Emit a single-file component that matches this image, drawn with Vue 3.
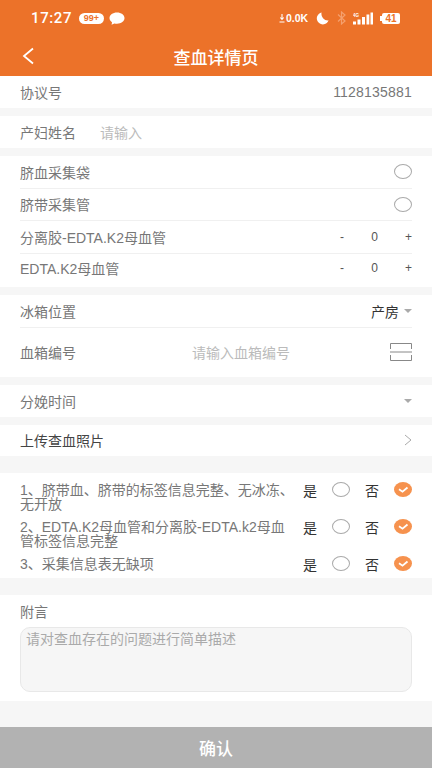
<script setup>
const checks = [
  { text: '1、脐带血、脐带的标签信息完整、无冰冻、无开放' },
  { text: '2、EDTA.K2母血管和分离胶-EDTA.k2母血管标签信息完整' },
  { text: '3、采集信息表无缺项' },
]
</script>

<template>
  <div class="page">
    <header class="header">
      <div class="status">
        <div class="status-left">
          <span class="time">17:27</span>
          <span class="pill">99+</span>
          <svg class="bubble" viewBox="0 0 16 13"><path d="M8 0.5c4.2 0 7.5 2.4 7.5 5.6S12.2 11.7 8 11.7c-.9 0-1.8-.1-2.6-.3L2.6 12.8l.4-2.6C1.300 9.200.5 7.800.5 6.100.5 2.900 3.800.5 8 .5z" fill="#fff"/></svg>
        </div>
        <div class="status-right">
          <span class="speed"><svg class="dl" viewBox="0 0 6 9"><path d="M3 0v5M1.300 3.500 3 5.500l1.700-2M.5 8h5" stroke="#fff" stroke-width="1.100" fill="none"/></svg>0.0K</span>
          <svg class="moon" viewBox="0 0 14 14"><path d="M6 .5A6.500 6.500 0 1 0 13.500 9 7 7 0 0 1 6 .5z" fill="#fff"/></svg>
          <svg class="bt" viewBox="0 0 9 14"><path d="M1 3.500l7 6.500-3.500 3V1L8 4 1 10.500" stroke="#f5a06e" fill="none" stroke-width="1.200"/></svg>
          <svg class="signal" viewBox="0 0 20 13">
            <text x="0" y="4.500" class="tiny">4G</text>
            <rect x="0" y="9.500" width="3" height="3" fill="#fff"/>
            <rect x="4.500" y="7.500" width="3" height="5" fill="#fff"/>
            <rect x="9" y="5" width="3" height="7.500" fill="#fff"/>
            <rect x="13.500" y="2.500" width="2.800" height="10" fill="#fff"/>
            <rect x="17.500" y="0.500" width="2.500" height="12" fill="#fff"/>
          </svg>
          <span class="battery">41</span>
        </div>
      </div>
      <div class="nav">
        <svg class="back" viewBox="0 0 12 18"><path d="M11 1.500 2 9l9 7.500" stroke="#fff" stroke-width="1.800" fill="none"/></svg>
        <span class="title">查血详情页</span>
      </div>
    </header>

    <section class="card row h32">
      <span class="label">协议号</span>
      <span class="number">1128135881</span>
    </section>

    <section class="card row h32 mt8 start">
      <span class="label name-label">产妇姓名</span>
      <span class="placeholder">请输入</span>
    </section>

    <section class="card mt8 pad">
      <div class="row line r32"><span class="label">脐血采集袋</span><span class="radio"></span></div>
      <div class="row line r32"><span class="label">脐带采集管</span><span class="radio"></span></div>
      <div class="row line r33">
        <span class="label">分离胶-EDTA.K2母血管</span>
        <div class="stepper"><span>-</span><span>0</span><span>+</span></div>
      </div>
      <div class="row r-last">
        <span class="label">EDTA.K2母血管</span>
        <div class="stepper"><span>-</span><span>0</span><span>+</span></div>
      </div>
    </section>

    <section class="card mt8 pad">
      <div class="row line r32">
        <span class="label">冰箱位置</span>
        <div class="select"><span class="value">产房</span><i class="caret"></i></div>
      </div>
      <div class="row r49">
        <span class="label">血箱编号</span>
        <span class="placeholder box-ph">请输入血箱编号</span>
        <svg class="scan" viewBox="0 0 22 18"><path d="M.5 6V.500h21V6M.5 12v5.500h21V12" fill="none" stroke="#888" stroke-width="1"/><path d="M0 9h22" stroke="#888" stroke-width="1"/></svg>
      </div>
    </section>

    <section class="card row h31 mt85">
      <span class="label">分娩时间</span><i class="caret"></i>
    </section>

    <section class="card row h31 mt8">
      <span class="label dark">上传查血照片</span>
      <svg class="chev" viewBox="0 0 8 12"><path d="M1 1l6 5-6 5" fill="none" stroke="#aaa" stroke-width="1"/></svg>
    </section>

    <section class="card checks">
      <div v-for="c in checks" :key="c.text" class="check">
        <span class="check-text">{{ c.text }}</span>
        <div class="answers">
          <span class="yn">是</span>
          <span class="radio"></span>
          <span class="yn no">否</span>
          <span class="tick">
            <svg viewBox="0 0 18 15" preserveAspectRatio="none"><path d="M5 7.300l3.500 2.400L13.500 5.500" fill="none" stroke="#fff" stroke-width="1.800"/></svg>
          </span>
        </div>
      </div>
    </section>

    <section class="card note">
      <div class="note-label">附言</div>
      <div class="textarea">请对查血存在的问题进行简单描述</div>
    </section>

    <button class="confirm">确认</button>
  </div>
</template>

<style scoped>
.page {
  width: 432px;
  height: 768px;
  background: #f6f6f6;
  font-family: "Liberation Sans", "Noto Sans CJK SC", sans-serif;
  overflow: hidden;
  display: flex;
  flex-direction: column;
  font-size: 14px;
  color: #777;
}
.header { height: 76px; background: #ec7229; color: #fff; flex: none; }
.status {
  height: 36px;
  display: flex;
  justify-content: space-between;
  align-items: center;
  padding: 0 32px 0 31px;
}
.status-left, .status-right { display: flex; align-items: center; }
.time { font: 500 15px/1 Roboto, sans-serif; letter-spacing: 0.600px; width: 48px; }
.pill {
  width: 25px; height: 11px; border-radius: 6px; background: #fff; color: #ec7229;
  font: 700 9px/11px "Liberation Sans", sans-serif; text-align: center;
}
.bubble { width: 16px; height: 13px; margin-left: 5px; }
.speed { display: flex; align-items: center; font: 700 10.500px/1 "Liberation Sans", sans-serif; width: 30px; white-space: nowrap; }
.dl { width: 6px; height: 9px; margin-right: 1px; flex: none; }
.moon { width: 13px; height: 13px; margin-left: 7px; }
.bt { width: 9px; height: 14px; margin-left: 8px; }
.signal { width: 20px; height: 13px; margin-left: 7px; }
.tiny { font: 700 4.500px "Liberation Sans", sans-serif; fill: #fff; }
.battery {
  width: 18px; height: 11px; margin-left: 9px; background: #fff; border-radius: 2px; color: #ec7229;
  font: 700 10px/11px "Liberation Sans", sans-serif; text-align: center; position: relative;
}
.battery::before {
  content: ""; position: absolute; left: -2px; top: 3px; width: 2px; height: 5px; background: #fff;
}
.nav { height: 40px; display: flex; align-items: center; justify-content: center; position: relative; }
.back { position: absolute; left: 22px; top: 11px; width: 12px; height: 18px; }
.title { font-size: 17px; font-weight: 500; }

.card { background: #fff; flex: none; }
.row { display: flex; align-items: center; justify-content: space-between; box-sizing: border-box; }
.start { justify-content: flex-start; }
.h32 { height: 32px; padding: 0 20px; }
.h31 { height: 31.500px; padding: 0 20px; }
.mt8 { margin-top: 8px; }
.mt85 { margin-top: 8.500px; }
.pad { padding: 0 20px; }
.label { color: #777; white-space: nowrap; }
.dark { color: #444; }
.number { color: #777; letter-spacing: 0.200px; }
.name-label { width: 80px; }
.placeholder { color: #bbb; }
.line { border-bottom: 1px solid #f0f0f0; }
.r32 { height: 32.500px; }
.r33 { height: 33px; }
.r-last { height: 33px; padding-bottom: 6px; }
.r49 { height: 49px; }
.radio {
  width: 18px; height: 15px; border-radius: 50%; border: 1px solid #aaa; box-sizing: border-box; flex: none;
}
.stepper {
  display: flex; width: 72px; justify-content: space-between; color: #555;
  font-size: 12px;
}
.select { display: flex; align-items: center; gap: 5px; }
.value { color: #333; }
.caret {
  width: 0; height: 0; border-left: 4.500px solid transparent; border-right: 4.500px solid transparent;
  border-top: 4px solid #aaa; display: block;
}
.box-ph { margin-left: 116px; margin-right: auto; }
.scan { width: 22px; height: 18px; }
.chev { width: 8px; height: 12px; }

.checks { margin-top: 16.500px; height: 105px; padding: 10px 20px 0; box-sizing: border-box; }
.check { display: flex; align-items: flex-start; justify-content: space-between; height: 37px; }
.check-text { width: 276px; color: #777; line-height: 14px; }
.answers { display: flex; align-items: center; width: 109px; height: 14px; flex: none; color: #333; }
.yn { width: 29px; }
.no { margin-left: 15px; }
.tick { width: 18px; height: 15px; border-radius: 50%; background: #f6924e; flex: none; }
.tick svg { display: block; width: 18px; height: 15px; }

.note { margin-top: 17.500px; height: 106px; padding: 9px 20px 0; box-sizing: border-box; }
.note-label { line-height: 16px; height: 23px; }
.textarea {
  height: 65px; background: #f6f6f6; border: 1px solid #e8e8e8; border-radius: 10px; box-sizing: border-box;
  padding: 2px 5px; color: #aaa; line-height: 18px;
}
.confirm {
  margin-top: 26px; height: 41px; width: 432px; flex: none; border: 0; background: #b2b2b2; color: #fff;
  font-family: inherit; font-size: 17px; font-weight: 500;
}
</style>
